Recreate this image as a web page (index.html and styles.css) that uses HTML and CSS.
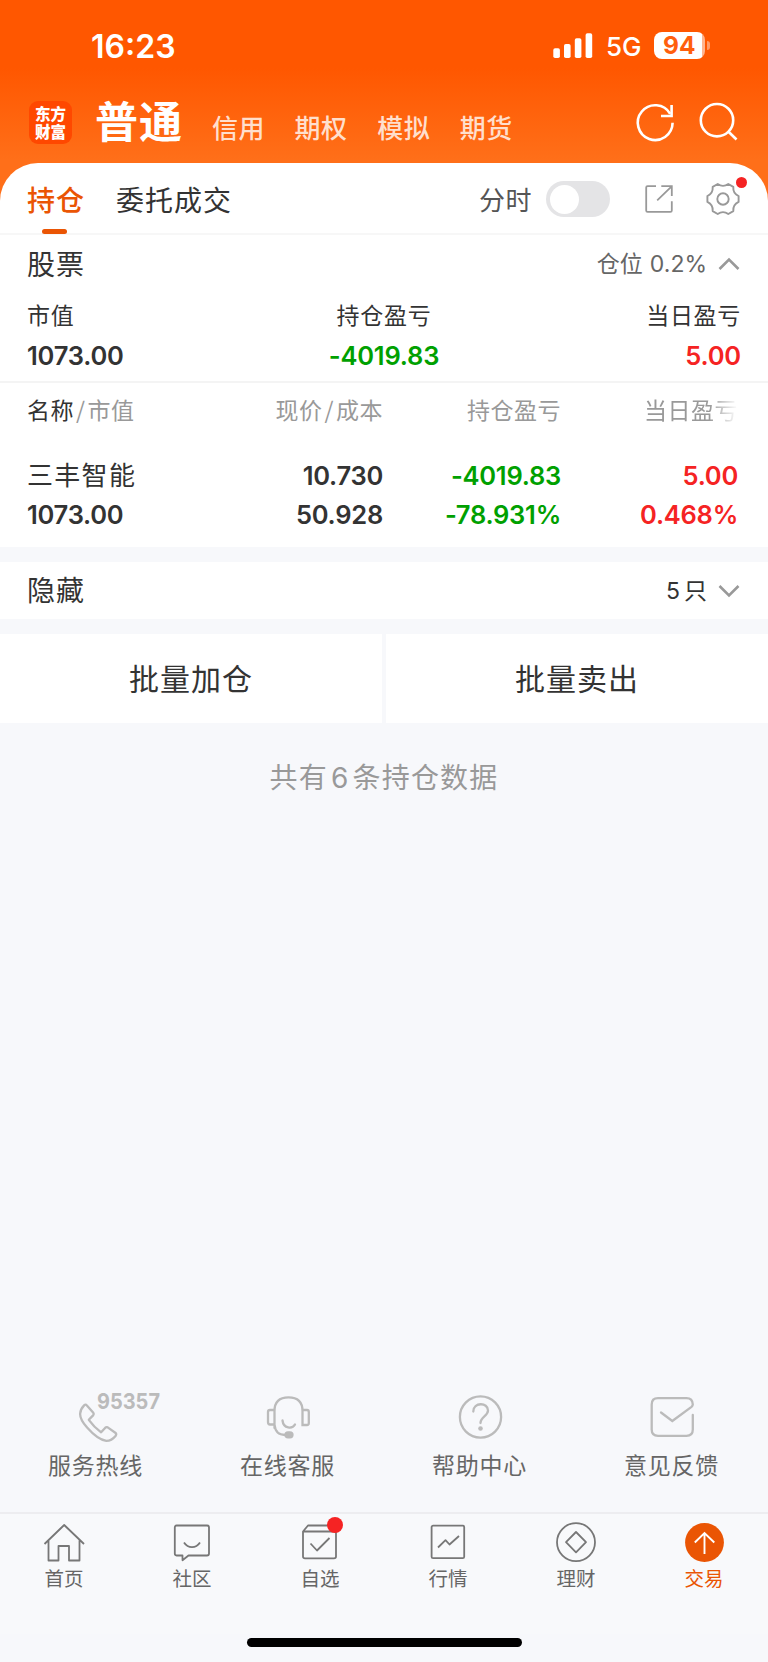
FILE: index.html
```html
<!DOCTYPE html>
<html lang="zh-CN">
<head>
<meta charset="utf-8">
<title>持仓</title>
<link rel="stylesheet" href="styles.css">
</head>
<body>
<div class="phone">
  <header class="top">
    <div class="status">
      <span class="clock num">16:23</span>
      <svg class="signal" width="40" height="26" viewBox="0 0 40 26" fill="#fff">
        <rect x="0.3" y="15.3" width="6.6" height="9.7" rx="1.8"/>
        <rect x="11" y="11" width="6.6" height="14" rx="1.8"/>
        <rect x="21.8" y="5.3" width="6.6" height="19.7" rx="1.8"/>
        <rect x="32.6" y="0.3" width="6.6" height="24.7" rx="1.8"/>
      </svg>
      <span class="net num">5G</span>
      <span class="battery"><span class="battery-body num">94</span><span class="battery-nub"></span></span>
    </div>
    <nav class="accounts">
      <span class="logo">东方<br>财富</span>
      <span class="account-on">普通</span>
      <span class="account">信用</span>
      <span class="account">期权</span>
      <span class="account">模拟</span>
      <span class="account">期货</span>
      <svg class="refresh" width="44" height="44" viewBox="0 0 44 44" fill="none" stroke="#fff" stroke-width="2.6">
        <path d="M39.6 22.8A17.4 17.4 0 1 1 37.2 13.8"/>
        <path d="M38.6 5V16H28"/>
      </svg>
      <svg class="search" width="44" height="44" viewBox="0 0 44 44" fill="none" stroke="#fff" stroke-width="2.6">
        <circle cx="20" cy="20.2" r="16.2"/>
        <path d="M31.5 31.7L39.5 39.5"/>
      </svg>
    </nav>
  </header>

  <main class="sheet">
    <div class="tabs">
      <span class="tab tab-on">持仓</span>
      <span class="tab">委托成交</span>
      <span class="minute">分时</span>
      <span class="toggle"><span class="knob"></span></span>
      <svg class="share" width="28" height="28" viewBox="0 0 28 28" fill="none" stroke="#999" stroke-width="1.8">
        <path d="M11 1.2H2.6Q1.2 1.2 1.2 2.6V25.4Q1.2 26.8 2.6 26.8H25.4Q26.8 26.8 26.8 25.4V16.3"/>
        <path d="M16.3 1.2H26.8V11M26.4 1.6L12.2 15.4"/>
      </svg>
      <span class="settings">
        <svg width="34" height="34" viewBox="-17 -17 34 34" fill="none" stroke="#999" stroke-width="1.9" stroke-linejoin="round">
          <path d="M-5.3 -15Q0 -11.300 5.3 -15L10.3 -12.100Q9.800 -5.650 15.600 -2.900V2.900Q9.800 5.650 10.300 12.100L5.300 15Q0 11.300 -5.300 15L-10.300 12.100Q-9.800 5.650 -15.600 2.900V-2.900Q-9.800 -5.650 -10.300 -12.100Z"/>
          <circle r="5.7"/>
        </svg>
        <i class="dot"></i>
      </span>
    </div>

    <section class="summary">
      <div class="summary-head">
        <h2 class="heading">股票</h2>
        <span class="ratio">仓位<b class="num">0.2%</b></span>
        <svg class="chev" width="22" height="14" viewBox="0 0 22 14" fill="none" stroke="#999" stroke-width="2.6"><path d="M1.5 12L11 2.500L20.5 12"/></svg>
      </div>
      <div class="totals labels"><span>市值</span><span>持仓盈亏</span><span>当日盈亏</span></div>
      <div class="totals num"><span>1073.00</span><span class="down">-4019.83</span><span class="up">5.00</span></div>
    </section>

    <section class="holdings">
      <div class="cols cols-head">
        <span><em>名称</em><i>/</i>市值</span><span>现价<i>/</i>成本</span><span>持仓盈亏</span><span class="fade">当日盈亏</span>
      </div>
      <div class="cols num first"><span class="name">三丰智能</span><span>10.730</span><span class="down">-4019.83</span><span class="up">5.00</span></div>
      <div class="cols num second"><span>1073.00</span><span>50.928</span><span class="down">-78.931%</span><span class="up">0.468%</span></div>
    </section>

    <section class="hidden-row">
      <h2 class="heading">隐藏</h2>
      <span class="count"><b class="num">5</b>只</span>
      <svg class="chev" width="22" height="14" viewBox="0 0 22 14" fill="none" stroke="#999" stroke-width="2.6"><path d="M1.5 2L11 11.5L20.5 2"/></svg>
    </section>

    <section class="actions"><span>批量加仓</span><span>批量卖出</span></section>
    <p class="total-note">共有<b class="num">6</b>条持仓数据</p>
  </main>

  <section class="support">
    <div class="help">
      <svg class="wide" width="90" height="56" viewBox="-20.500 1.500 90 56" fill="none" stroke="#bbb" stroke-width="2.3" stroke-linejoin="round">
        <path d="M12.600 18.900Q14.100 17.300 15.400 18.900L21.800 26.300Q22.700 27.500 21.800 28.600L17.300 33.300Q22 40 29.600 45.800L33.600 41.400Q34.800 40.200 36.200 40.900L43.800 46.200Q45.400 47.600 44.200 49.200C42 52 39 54.300 34.800 54.400C28.500 53.400 20.500 46.600 15.600 41C11 35.800 8.600 31 8.600 27.400C8.700 24 10.800 20.800 12.600 18.900Z"/>
        <text class="hotline" x="25.500" y="22.300" textLength="63" lengthAdjust="spacingAndGlyphs">95357</text>
      </svg>
      <span>服务热线</span>
    </div>
    <div class="help">
      <svg width="90" height="56" viewBox="0 0 90 56" fill="none" stroke="#bbb" stroke-width="2.3" stroke-linecap="round">
        <path d="M31.500 40V23Q31.500 9.300 45.500 9.300Q59.500 9.300 59.500 23V37H64Q65.800 37 65.800 35V24Q65.800 22 64 22H59.500M31.500 22H27Q25 22 25 24V34Q25 36.500 27 36.500H31.500Q32.500 47 42 47"/>
        <path d="M39.500 32.500C40.500 41 49.500 41 52 36.500"/>
        <rect x="42.500" y="44.300" width="7" height="5" rx="2.500" fill="#bbb"/>
      </svg>
      <span>在线客服</span>
    </div>
    <div class="help">
      <svg width="90" height="56" viewBox="0 0 90 56" fill="none" stroke="#bbb" stroke-width="2.3">
        <circle cx="45.500" cy="29" r="20.600"/>
        <path stroke-linecap="round" d="M38.300 23.500C38.300 14 53 14 53 22.500C53 28 45.500 29 45.500 35"/>
        <circle cx="45.500" cy="40.500" r="2.300" fill="#bbb" stroke="none"/>
      </svg>
      <span>帮助中心</span>
    </div>
    <div class="help">
      <svg width="90" height="56" viewBox="0 0 90 56" fill="none" stroke="#bbb" stroke-width="2.3" stroke-linecap="round">
        <path d="M65.800 27V41.500Q65.800 47.800 59.500 47.800H31Q24.700 47.800 24.700 41.500V16.500Q24.700 10.200 31 10.200H59.500Q65.500 10.200 65.800 16.500Q65.500 18 64.500 18.800L45.300 33L34 24.500"/>
      </svg>
      <span>意见反馈</span>
    </div>
  </section>

  <footer class="tabbar">
    <div class="nav">
      <svg width="44" height="44" viewBox="0 0 44 44" fill="none" stroke="#777" stroke-width="1.8" stroke-linejoin="round"><path d="M2.500 22L22.200 3L42 22M6.500 18.500V38.500H16.500V24H27V38.500H37.500V18.500"/></svg>
      <span>首页</span>
    </div>
    <div class="nav">
      <svg width="44" height="44" viewBox="0 0 44 44" fill="none" stroke="#777" stroke-width="1.800" stroke-linejoin="round"><path d="M6.500 3.500H37Q39 3.500 39 5.500V31.500Q39 33.500 37 33.500H18.500L12.500 38.300V33.500H6.500Q4.800 33.500 4.800 31.500V5.500Q4.800 3.500 6.500 3.500Z"/><path d="M14 20.500C18 26.700 26 26.700 30 20.500"/></svg>
      <span>社区</span>
    </div>
    <div class="nav">
      <svg width="44" height="44" viewBox="0 0 44 44" fill="none" stroke="#777" stroke-width="1.800" stroke-linejoin="round"><path d="M5 9.500L10 3.500H33L38 9.500V34.500Q38 36.300 36 36.300H7Q5 36.300 5 34.500ZM5 9.500H38M12.500 21.500L19 28.500L31.500 16"/></svg>
      <i class="dot dot-big"></i>
      <span>自选</span>
    </div>
    <div class="nav">
      <svg width="44" height="44" viewBox="0 0 44 44" fill="none" stroke="#777" stroke-width="1.800" stroke-linejoin="round"><rect x="5.600" y="3.600" width="32.600" height="32.600" rx="1.500"/><path d="M12 25.500L19.500 18.200L23.500 22.500L33 14"/></svg>
      <span>行情</span>
    </div>
    <div class="nav">
      <svg width="44" height="44" viewBox="0 0 44 44" fill="none" stroke="#777" stroke-width="1.800" stroke-linejoin="round"><circle cx="22" cy="20.200" r="19"/><path d="M22 10L32 20.200L22 30.400L12 20.200Z"/></svg>
      <span>理财</span>
    </div>
    <div class="nav nav-on">
      <svg width="44" height="44" viewBox="0 0 44 44" fill="none" stroke="#fff" stroke-width="1.900"><circle cx="22.500" cy="20.500" r="19.400" fill="#ea5504" stroke="none"/><path d="M22.500 32V11.500M12.800 20.500L22.500 11L32.300 20.500"/></svg>
      <span>交易</span>
    </div>
  </footer>
  <div class="home-bar"></div>
</div>
</body>
</html>
```
FILE: styles.css
```css
* { box-sizing: border-box; }
body {
  margin: 0;
  font-family: "Noto Sans CJK SC", sans-serif;
  color: #333;
  background: #f7f8fb;
}
i, em { font-style: normal; }
b { font-weight: inherit; }
svg { display: block; flex: none; }
.num { font-family: Inter, "Noto Sans CJK SC", sans-serif; }
.phone {
  width: 768px;
  height: 1662px;
  display: flex;
  flex-direction: column;
  white-space: nowrap;
  overflow: hidden;
}

/* header */
.top {
  height: 203px;
  flex: none;
  background: linear-gradient(#ff5700 68px, #ff6f19 160px);
  color: #fff;
}
.status { height: 92px; display: flex; align-items: center; padding-left: 91px; }
.clock { width: 462px; font-size: 32px; font-weight: 600; line-height: 40px; padding-top: 1px; }
.net { width: 48px; margin-left: 13px; font-size: 26px; font-weight: 500; line-height: 32px; padding-top: 2px; }
.battery { display: flex; align-items: center; gap: 2px; margin-top: -1px; }
.battery-body {
  width: 51px; height: 27px; border-radius: 8px;
  background: linear-gradient(90deg, #fff 48px, #ffb48e 48px);
  color: #ff5f0d; font-size: 24.5px; font-weight: 700; line-height: 27px;
  padding-left: 9px;
}
.battery-nub { width: 3px; height: 9px; border-radius: 0 4px 4px 0; background: #ff9a68; }
.accounts { height: 64px; display: flex; align-items: center; padding-left: 29px; }
.logo {
  width: 43px; height: 43px; margin: -3px 23px 0 0; border-radius: 9px;
  padding-top: 3px; background: #ff4800; text-align: center;
  font-size: 15.500px; font-weight: 900; line-height: 18px;
}
.account-on { width: 117px; font-size: 43px; font-weight: 700; line-height: 60px; margin-top: -11px; letter-spacing: 1px; }
.account { width: 82.600px; font-size: 26px; font-weight: 500; line-height: 36px; margin-top: 6px; color: #ffdfcd; letter-spacing: .5px; }
.refresh { margin: -5px 0 0 91px; }
.search { margin: -5px 0 0 20px; }

/* sheet */
.sheet { margin-top: -40px; border-radius: 38px 38px 0 0; background: #fff; flex: none; }
.tabs { height: 72px; display: flex; align-items: center; padding: 2px 0 0 27px; border-bottom: 2px solid #f7f7f7; }
.tab { width: 363px; font-size: 28px; line-height: 70px; height: 70px; letter-spacing: 1px; }
.tab-on { position: relative; width: 89px; font-weight: 500; color: #ea5504; }
.tab-on::after {
  content: ""; position: absolute; left: 15px; bottom: 0;
  width: 25px; height: 5px; border-radius: 2.500px; background: #ea5504;
}
.minute { width: 67px; font-size: 26px; line-height: 40px; color: #555; letter-spacing: .5px; }
.toggle { width: 64px; height: 36px; border-radius: 18px; background: #e4e4e6; padding: 3.500px; }
.knob { display: block; width: 29px; height: 29px; border-radius: 50%; background: #fff; }
.share { margin-left: 34.500px; }
.settings { position: relative; margin-left: 33.500px; }
.dot { position: absolute; right: -7px; top: -5px; width: 11px; height: 11px; border-radius: 50%; background: #f52323; }

.summary { height: 148px; border-bottom: 2px solid #f4f4f4; }
.summary-head, .hidden-row { display: flex; align-items: center; padding: 0 28px 0 27px; height: 55px; }
.heading { margin: 0 auto 0 0; font-size: 28px; font-weight: 400; line-height: 40px; letter-spacing: 1px; }
.ratio { font-size: 23px; color: #666; margin-right: 11px; line-height: 32px; }
.ratio b { margin-left: 7px; }
.summary-head .chev { margin-top: 3px; }
.totals { display: grid; grid-template-columns: 1fr 1fr 1fr; padding: 0 27px; font-size: 25.500px; line-height: 37px; height: 39px; font-weight: 600; letter-spacing: -.2px; }
.totals > :nth-child(2) { text-align: center; }
.totals > :nth-child(3) { text-align: right; }
.labels { font-size: 23px; font-weight: 400; letter-spacing: .7px; height: 47px; line-height: 49px; }
.down { color: #00a000; }
.up { color: #f52323; }

.holdings { height: 164px; }
.cols { display: grid; grid-template-columns: 183px 173px 178px 177px; padding-left: 27px; font-size: 25.500px; font-weight: 600; line-height: 39px; letter-spacing: -.25px; }
.cols > * { text-align: right; }
.cols > :first-child { text-align: left; }
.cols-head { font-size: 23px; font-weight: 400; line-height: 52px; height: 73px; color: #999; letter-spacing: .5px; }
.cols-head em { color: #333; }
.cols-head i { margin: 0 2px; }
.fade { -webkit-mask-image: linear-gradient(90deg, #000 148px, transparent 177px); mask-image: linear-gradient(90deg, #000 148px, transparent 177px); }
.cols > .name { font-size: 26px; font-weight: 400; letter-spacing: 1.300px; }

.hidden-row { border-top: 15px solid #f7f8fb; height: 72px; padding-bottom: 3px; }
.hidden-row .chev { margin-top: 3px; }
.count { font-size: 23px; margin-right: 11px; }
.count b { margin-right: 4px; }
.actions { display: grid; grid-template-columns: 1fr 1fr; gap: 4px; background: #f7f8fb; padding-top: 15px; height: 104px; }
.actions span { background: #fff; text-align: center; font-size: 30px; line-height: 86px; letter-spacing: 1px; }
.total-note { margin: 0; background: #f7f8fb; height: 110px; line-height: 106px; text-align: center; font-size: 28px; color: #999; letter-spacing: 1.200px; }
.total-note b { margin: 0 3px; }

/* support links */
.support { margin-top: auto; height: 124px; flex: none; display: grid; grid-template-columns: repeat(4, 1fr); }
.help { display: flex; flex-direction: column; align-items: center; font-size: 23px; line-height: 41px; color: #666; letter-spacing: .7px; padding-right: 1px; }
.help svg { margin-left: 1px; }
.wide { overflow: visible; }
.hotline { font: 700 22px Inter, sans-serif; fill: #bbb; stroke: none; letter-spacing: 0; }

/* bottom navigation */
.tabbar { flex: none; height: 122px; border-top: 2px solid #ededf0; display: grid; grid-template-columns: repeat(6, 1fr); padding-top: 8px; background: #f8f9fb; }
.nav { position: relative; display: flex; flex-direction: column; align-items: center; font-size: 19.500px; line-height: 23px; color: #666; }
.nav-on { color: #ea5504; }
.dot-big { width: 16px; height: 16px; right: 41px; top: -5px; }
.home-bar { flex: none; width: 275px; height: 9px; margin: 4px auto 15px; border-radius: 5px; background: #000; }
```
